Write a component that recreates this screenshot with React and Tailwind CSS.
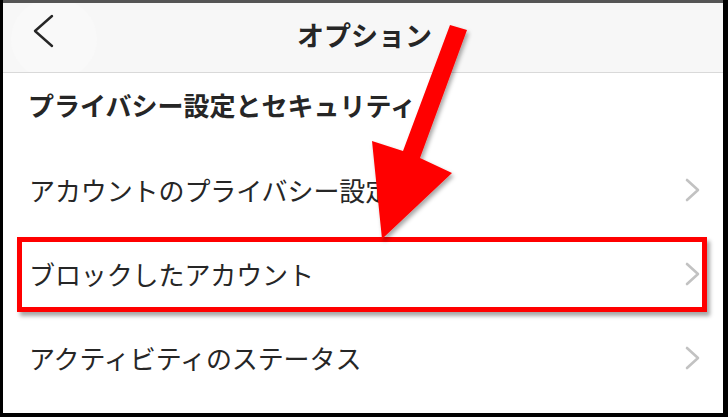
import React from "react";

const font = { fontFamily: '"Noto Sans CJK JP", "Noto Sans", sans-serif' };

function Chevron() {
  return (
    <svg width="16" height="24" viewBox="0 0 16 24" className="shrink-0">
      <polyline points="2,2 13,12 2,22" fill="none" stroke="#c2c2c2" strokeWidth="2.6" strokeLinecap="round" strokeLinejoin="round" />
    </svg>
  );
}

function Row({ label }) {
  return (
    <div className="h-[84px] flex items-center justify-between pl-[26px] pr-[22px]">
      <span className="text-[26px] text-[#262626] leading-none tracking-[-0.1px]">{label}</span>
      <Chevron />
    </div>
  );
}

export default function App() {
  return (
    <div className="w-[728px] h-[417px] bg-black overflow-hidden" style={font}>
      <div className="relative ml-[3px] mr-[5px] mt-0 h-[413px] bg-white border-t-[3px] border-t-[#555] flex flex-col">
        <div className="h-[70px] shrink-0 bg-[#f7f7f7] border-b border-[#d9d9d9] flex items-center justify-center relative overflow-hidden">
          <div className="absolute left-[8px] top-[-4px] w-[86px] h-[80px] rounded-full bg-[#f9f9f9]" />
          <svg className="absolute left-[29px] top-[11px]" width="24" height="34" viewBox="0 0 24 34">
            <polyline points="20,2 3,17 20,32" fill="none" stroke="#262626" strokeWidth="2.4" strokeLinecap="round" strokeLinejoin="round" />
          </svg>
          <span className="text-[27px] font-bold text-[#262626] leading-none ml-[3px] mt-[-6px]">オプション</span>
        </div>
        <div className="h-[64px] shrink-0 flex items-center pl-[25px]">
          <span className="text-[26px] font-bold text-[#262626] leading-none tracking-[0px]">プライバシー設定とセキュリティ</span>
        </div>
        <div className="mt-[11px] flex flex-col">
          <Row label="アカウントのプライバシー設定" />
          <Row label="ブロックしたアカウント" />
          <Row label="アクティビティのステータス" />
        </div>

        <div className="absolute left-[14px] top-[234px] w-[690px] h-[75px] border-[5px] border-[#ff0000] shadow-[3px_4px_4px_rgba(0,0,0,0.35)]" />
        <svg className="absolute left-0 top-0 pointer-events-none" width="720" height="413" viewBox="0 0 720 413">
          <defs>
            <filter id="sh" x="-20%" y="-20%" width="140%" height="140%">
              <feDropShadow dx="2" dy="3" stdDeviation="2" floodColor="#000" floodOpacity="0.35" />
            </filter>
          </defs>
          <polygon
            transform="translate(-3,0)"
            points="450,22 467,27 420,155 452,170 382,236 372,138 403,148"
            fill="#ff0000"
            filter="url(#sh)"
          />
        </svg>
      </div>
    </div>
  );
}
